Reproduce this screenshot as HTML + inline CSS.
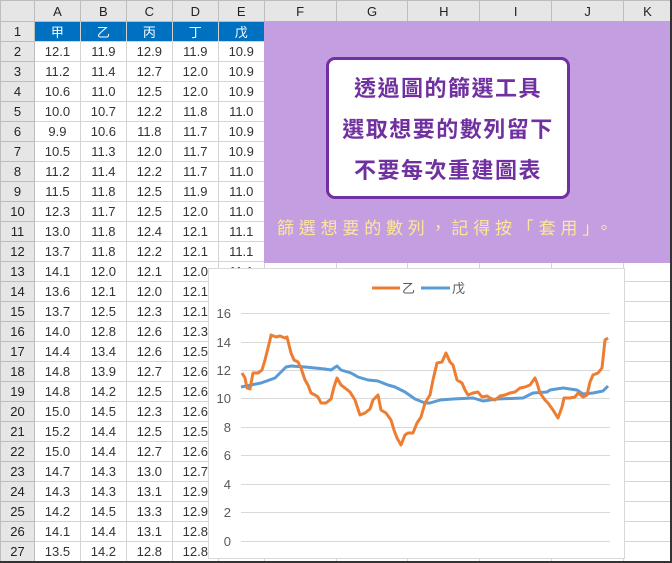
<!DOCTYPE html>
<html><head><meta charset="utf-8"><style>
*{margin:0;padding:0;box-sizing:border-box}
body{width:672px;height:563px;overflow:hidden;background:#fff;font-family:"Liberation Sans","Noto Sans CJK TC",sans-serif;position:relative}
table{border-collapse:collapse;table-layout:fixed;position:absolute;left:0;top:0}
td{border:1px solid #d4d4d4;height:20px;font-size:13px;color:#333;text-align:center;padding:0;overflow:hidden;white-space:nowrap}
tr.h td{background:#e6e6e6;height:21px;color:#222;font-size:13px;border-color:#bdbdbd}
td.r{background:#e6e6e6;color:#222;border-color:#bdbdbd}
tr.b td.c{background:#0070c0;color:#fff}
#purple{position:absolute;left:264px;top:21px;width:408px;height:242px;background:#c39ee0}
#box{position:absolute;left:326px;top:57px;width:244px;height:142px;background:#fff;border:3px solid #7030a0;border-radius:9px;color:#7030a0;font-weight:bold;font-size:22px;letter-spacing:1.5px;text-align:center;line-height:41px;padding-top:7px;font-family:"Noto Sans CJK TC",sans-serif;white-space:nowrap}
#ytxt{position:absolute;left:277px;top:214px;color:#ffe699;font-size:17px;font-family:"Noto Sans CJK TC",sans-serif;letter-spacing:4.8px;white-space:nowrap}
#chart{position:absolute;left:208px;top:268px;width:417px;height:291px;background:#fff;border:1px solid #d9d9d9}
#frame{position:absolute;left:0;top:0;width:672px;height:563px;border-right:2px solid #333;border-bottom:2px solid #333;pointer-events:none}
</style></head><body>
<table>
<colgroup><col style="width:34px"><col style="width:46px"><col style="width:46px"><col style="width:46px"><col style="width:46px"><col style="width:46px"><col style="width:72px"><col style="width:72px"><col style="width:72px"><col style="width:72px"><col style="width:72px"><col style="width:48px"></colgroup>
<tr class="h"><td></td><td>A</td><td>B</td><td>C</td><td>D</td><td>E</td><td>F</td><td>G</td><td>H</td><td>I</td><td>J</td><td>K</td></tr>
<tr class="b"><td class="r">1</td><td class="c">甲</td><td class="c">乙</td><td class="c">丙</td><td class="c">丁</td><td class="c">戊</td><td></td><td></td><td></td><td></td><td></td><td></td></tr>
<tr><td class="r">2</td><td>12.1</td><td>11.9</td><td>12.9</td><td>11.9</td><td>10.9</td><td></td><td></td><td></td><td></td><td></td><td></td></tr>
<tr><td class="r">3</td><td>11.2</td><td>11.4</td><td>12.7</td><td>12.0</td><td>10.9</td><td></td><td></td><td></td><td></td><td></td><td></td></tr>
<tr><td class="r">4</td><td>10.6</td><td>11.0</td><td>12.5</td><td>12.0</td><td>10.9</td><td></td><td></td><td></td><td></td><td></td><td></td></tr>
<tr><td class="r">5</td><td>10.0</td><td>10.7</td><td>12.2</td><td>11.8</td><td>11.0</td><td></td><td></td><td></td><td></td><td></td><td></td></tr>
<tr><td class="r">6</td><td>9.9</td><td>10.6</td><td>11.8</td><td>11.7</td><td>10.9</td><td></td><td></td><td></td><td></td><td></td><td></td></tr>
<tr><td class="r">7</td><td>10.5</td><td>11.3</td><td>12.0</td><td>11.7</td><td>10.9</td><td></td><td></td><td></td><td></td><td></td><td></td></tr>
<tr><td class="r">8</td><td>11.2</td><td>11.4</td><td>12.2</td><td>11.7</td><td>11.0</td><td></td><td></td><td></td><td></td><td></td><td></td></tr>
<tr><td class="r">9</td><td>11.5</td><td>11.8</td><td>12.5</td><td>11.9</td><td>11.0</td><td></td><td></td><td></td><td></td><td></td><td></td></tr>
<tr><td class="r">10</td><td>12.3</td><td>11.7</td><td>12.5</td><td>12.0</td><td>11.0</td><td></td><td></td><td></td><td></td><td></td><td></td></tr>
<tr><td class="r">11</td><td>13.0</td><td>11.8</td><td>12.4</td><td>12.1</td><td>11.1</td><td></td><td></td><td></td><td></td><td></td><td></td></tr>
<tr><td class="r">12</td><td>13.7</td><td>11.8</td><td>12.2</td><td>12.1</td><td>11.1</td><td></td><td></td><td></td><td></td><td></td><td></td></tr>
<tr><td class="r">13</td><td>14.1</td><td>12.0</td><td>12.1</td><td>12.0</td><td>11.1</td><td></td><td></td><td></td><td></td><td></td><td></td></tr>
<tr><td class="r">14</td><td>13.6</td><td>12.1</td><td>12.0</td><td>12.1</td><td></td><td></td><td></td><td></td><td></td><td></td><td></td></tr>
<tr><td class="r">15</td><td>13.7</td><td>12.5</td><td>12.3</td><td>12.1</td><td></td><td></td><td></td><td></td><td></td><td></td><td></td></tr>
<tr><td class="r">16</td><td>14.0</td><td>12.8</td><td>12.6</td><td>12.3</td><td></td><td></td><td></td><td></td><td></td><td></td><td></td></tr>
<tr><td class="r">17</td><td>14.4</td><td>13.4</td><td>12.6</td><td>12.5</td><td></td><td></td><td></td><td></td><td></td><td></td><td></td></tr>
<tr><td class="r">18</td><td>14.8</td><td>13.9</td><td>12.7</td><td>12.6</td><td></td><td></td><td></td><td></td><td></td><td></td><td></td></tr>
<tr><td class="r">19</td><td>14.8</td><td>14.2</td><td>12.5</td><td>12.6</td><td></td><td></td><td></td><td></td><td></td><td></td><td></td></tr>
<tr><td class="r">20</td><td>15.0</td><td>14.5</td><td>12.3</td><td>12.6</td><td></td><td></td><td></td><td></td><td></td><td></td><td></td></tr>
<tr><td class="r">21</td><td>15.2</td><td>14.4</td><td>12.5</td><td>12.5</td><td></td><td></td><td></td><td></td><td></td><td></td><td></td></tr>
<tr><td class="r">22</td><td>15.0</td><td>14.4</td><td>12.7</td><td>12.6</td><td></td><td></td><td></td><td></td><td></td><td></td><td></td></tr>
<tr><td class="r">23</td><td>14.7</td><td>14.3</td><td>13.0</td><td>12.7</td><td></td><td></td><td></td><td></td><td></td><td></td><td></td></tr>
<tr><td class="r">24</td><td>14.3</td><td>14.3</td><td>13.1</td><td>12.9</td><td></td><td></td><td></td><td></td><td></td><td></td><td></td></tr>
<tr><td class="r">25</td><td>14.2</td><td>14.5</td><td>13.3</td><td>12.9</td><td></td><td></td><td></td><td></td><td></td><td></td><td></td></tr>
<tr><td class="r">26</td><td>14.1</td><td>14.4</td><td>13.1</td><td>12.8</td><td></td><td></td><td></td><td></td><td></td><td></td><td></td></tr>
<tr><td class="r">27</td><td>13.5</td><td>14.2</td><td>12.8</td><td>12.8</td><td></td><td></td><td></td><td></td><td></td><td></td><td></td></tr>
</table>
<div id="purple"></div>
<div id="box">透過圖的篩選工具<br>選取想要的數列留下<br>不要每次重建圖表</div>
<div id="ytxt">篩選想要的數列，記得按「套用」。</div>
<div id="chart"></div>
<svg style="position:absolute;left:0;top:0" width="672" height="563" font-family="Liberation Sans, Noto Sans CJK TC, sans-serif">
<g stroke="#d9d9d9" stroke-width="1">
<line x1="241" y1="313.5" x2="610" y2="313.5"/><line x1="241" y1="342.5" x2="610" y2="342.5"/>
<line x1="241" y1="370.5" x2="610" y2="370.5"/><line x1="241" y1="398.5" x2="610" y2="398.5"/>
<line x1="241" y1="427.5" x2="610" y2="427.5"/><line x1="241" y1="455.5" x2="610" y2="455.5"/>
<line x1="241" y1="484.5" x2="610" y2="484.5"/><line x1="241" y1="512.5" x2="610" y2="512.5"/>
<line x1="241" y1="541.5" x2="610" y2="541.5"/></g>
<g font-size="13" fill="#595959" text-anchor="end">
<text x="231" y="318">16</text><text x="231" y="347">14</text><text x="231" y="375">12</text>
<text x="231" y="403">10</text><text x="231" y="432">8</text><text x="231" y="460">6</text>
<text x="231" y="489">4</text><text x="231" y="517">2</text><text x="231" y="546">0</text></g>
<line x1="372" y1="288" x2="400" y2="288" stroke="#ed7d31" stroke-width="3"/>
<text x="402" y="293" font-size="13" fill="#595959">乙</text>
<line x1="421" y1="288" x2="450" y2="288" stroke="#5b9bd5" stroke-width="3"/>
<text x="452" y="293" font-size="13" fill="#595959">戊</text>
<polyline fill="none" stroke="#5b9bd5" stroke-width="3" stroke-linejoin="round" points="241,387 251,385 261,383 275,378 280,373 286,367 291,366 305,367 315,368 325,369 331,370 337,366 341,370 351,373 358,377 368,380 378,381 388,385 395,387 405,392 415,399 425,403 430,403 440,400 453,399 473,398 483,401 497,399 523,398 533,393 547,392 550,390 563,388 577,390 583,394 593,393 603,391 608,386"/>
<polyline fill="none" stroke="#ed7d31" stroke-width="3" stroke-linejoin="round" points="242,373 245,378 247,388 250,389 253,373 258,373 262,370 265,360 270,340 271,335 276,337 280,336 285,338 287,337 291,353 294,360 298,362 301,368 305,380 308,385 311,393 315,395 318,397 321,403 326,403 331,399 334,387 337,378 341,385 345,388 350,392 355,400 360,415 365,413 370,409 373,400 378,395 381,410 386,413 391,420 394,430 397,438 401,445 405,435 408,433 413,433 417,423 421,417 425,403 430,395 433,380 437,363 442,362 446,353 450,362 453,365 457,380 462,383 465,390 468,395 473,393 478,392 482,397 487,396 490,398 495,400 500,396 505,395 510,393 515,392 520,388 525,387 530,385 535,378 537,383 540,393 545,400 548,403 553,410 558,418 562,407 564,398 570,398 575,397 578,393 583,397 587,395 590,382 593,375 598,373 602,368 605,340 608,338"/>
</svg>
<div id="frame"></div>
</body></html>
